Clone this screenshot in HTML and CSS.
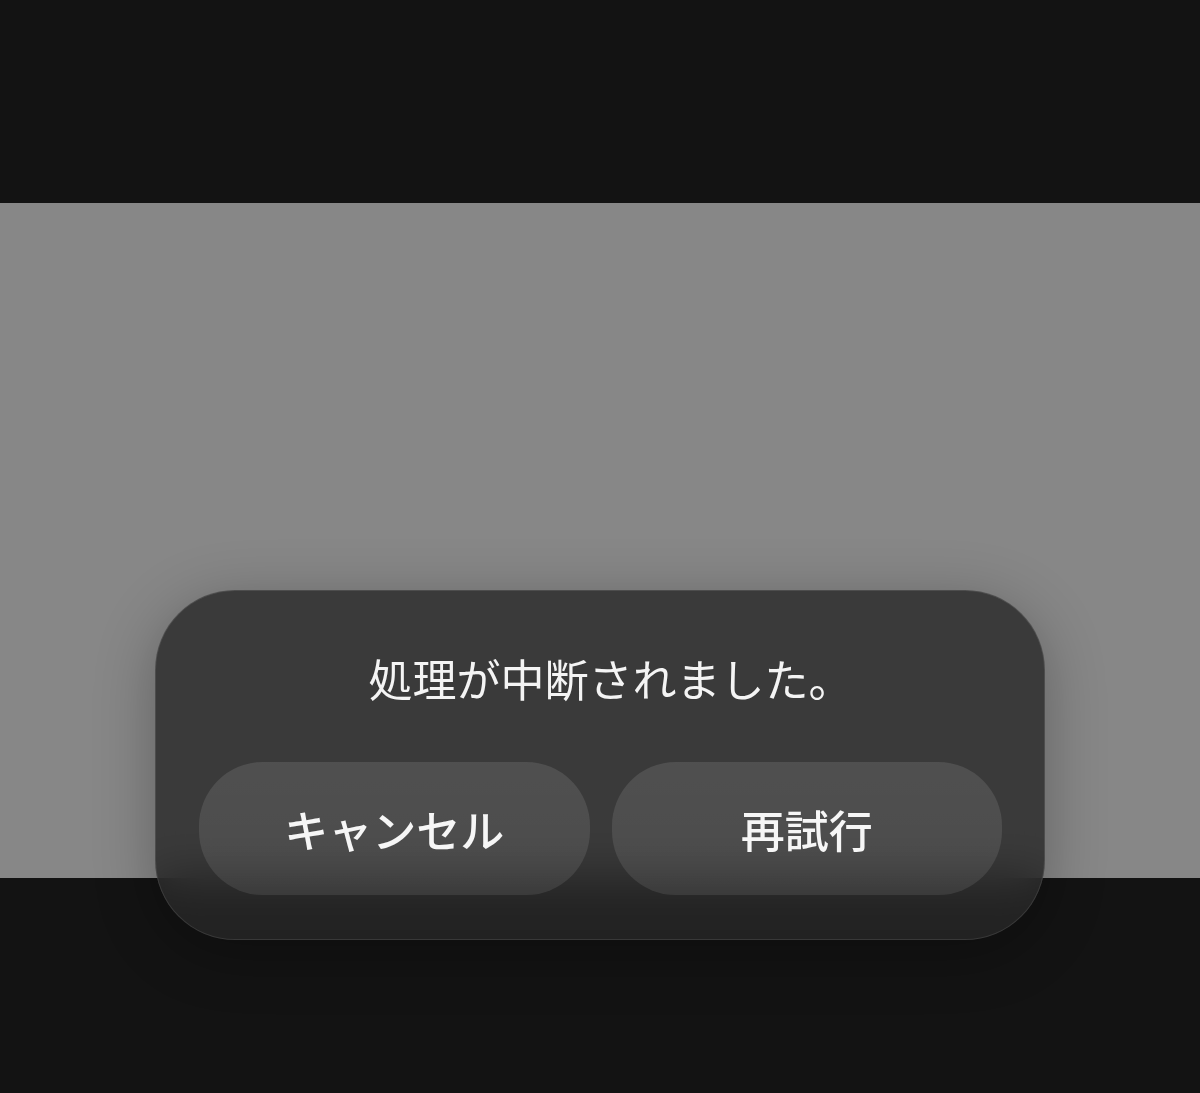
FILE: index.html
```html
<!DOCTYPE html>
<html lang="ja">
<head>
<meta charset="utf-8">
<link rel="stylesheet" href="styles.css">
</head>
<body>
<div class="screen">
  <div class="band band-top"></div>
  <div class="band band-mid"></div>
  <div class="band band-bottom"></div>
  <div class="dialog">
    <p class="title">処理が中断されました。</p>
    <div class="actions">
      <button class="btn">キャンセル</button>
      <button class="btn">再試行</button>
    </div>
  </div>
</div>
</body>
</html>
```
FILE: styles.css
```css
html, body {
  margin: 0;
  padding: 0;
  background: #131313;
}
.screen {
  position: relative;
  width: 1200px;
  height: 1093px;
  display: flex;
  flex-direction: column;
  font-family: "Noto Sans CJK JP", "Noto Sans", sans-serif;
}
.band-top { height: 203px; background: #131313; }
.band-mid { height: 675px; background: #878787; }
.band-bottom { flex: 1; background: #131313; }
.dialog {
  position: absolute;
  left: 155px;
  top: 590px;
  width: 890px;
  height: 350px;
  box-sizing: border-box;
  padding: 55px 42px 43px 43px;
  border-radius: 80px;
  background: rgba(39, 39, 39, 0.8);
  backdrop-filter: blur(24px);
  -webkit-backdrop-filter: blur(24px);
  border: 1.5px solid rgba(255, 255, 255, 0.1);
  box-shadow: 0 12px 60px rgba(0, 0, 0, 0.28);
  display: flex;
  flex-direction: column;
}
.title {
  margin: 0;
  padding-left: 20px;
  height: 64px;
  line-height: 64px;
  text-align: center;
  color: #f4f4f4;
  font-size: 44px;
  font-weight: 400;
}
.actions {
  margin-top: 52px;
  display: grid;
  grid-template-columns: 1fr 1fr;
  gap: 22px;
}
.btn {
  height: 133px;
  border: none;
  border-radius: 64px;
  background: linear-gradient(rgba(255, 255, 255, 0.11), rgba(255, 255, 255, 0.09));
  color: #f6f6f6;
  font-family: "Noto Sans CJK JP", "Noto Sans", sans-serif;
  font-size: 44px;
  font-weight: 500;
  padding: 0;
}
```
